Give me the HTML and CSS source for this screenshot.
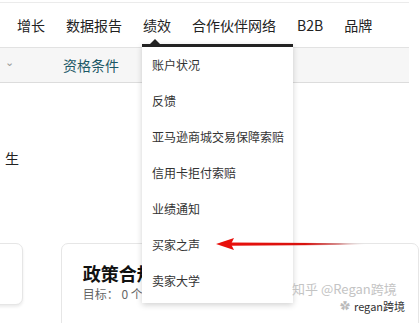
FILE: index.html
```html
<!DOCTYPE html>
<html lang="zh-CN">
<head>
    <meta charset="UTF-8">
    <title>绩效</title>
    <link rel="stylesheet" href="styles.css">
</head>
<body>
    <div class="page">
        <div class="topline"></div>

        <!-- Main nav -->
        <div class="nav">
            <span class="nav-item">增长</span>
            <span class="nav-item">数据报告</span>
            <span class="nav-item">绩效</span>
            <span class="nav-item">合作伙伴网络</span>
            <span class="nav-item">B2B</span>
            <span class="nav-item">品牌</span>
        </div>

        <div class="subnav">
            <span class="chevron">&#8964;</span>
            <span class="subnav-link">资格条件</span>
        </div>

        <div class="main">
            <div class="note">生</div>
            <div class="cards">
                <div class="card card-left"></div>
                <div class="card card-main">
                    <div class="card-title">政策合规</div>
                    <div class="card-sub">目标： 0 个</div>
                </div>
            </div>
        </div>

        <!-- Dropdown -->
        <div class="dropdown">
            <div class="caret"></div>
            <div class="menu-item">账户状况</div>
            <div class="menu-item">反馈</div>
            <div class="menu-item">亚马逊商城交易保障索赔</div>
            <div class="menu-item">信用卡拒付索赔</div>
            <div class="menu-item">业绩通知</div>
            <div class="menu-item">买家之声</div>
            <div class="menu-item">卖家大学</div>
        </div>

        <!-- Red arrow -->
        <svg class="arrow" width="170" height="14" viewBox="0 0 170 14">
            <defs>
                <linearGradient id="fade" x1="0" y1="0" x2="1" y2="0">
                    <stop offset="0" stop-color="#e8100c"/>
                    <stop offset="0.55" stop-color="#d8120e"/>
                    <stop offset="0.8" stop-color="#b22" stop-opacity="0.5"/>
                    <stop offset="1" stop-color="#ddd" stop-opacity="0"/>
                </linearGradient>
            </defs>
            <path d="M14 5.5 L150 6.3 L150 7.7 L14 8.8 Z" fill="url(#fade)"/>
            <path d="M0 7 L18 1 L15 7 L18 13 Z" fill="#e8100c"/>
        </svg>

        <div class="watermark">
            <div class="wm-main">知乎 @Regan跨境</div>
            <div class="wm-sub"><span class="wm-logo">✿</span>regan跨境</div>
        </div>
    </div>
</body>
</html>
```

FILE: styles.css
```css
* {
    margin: 0;
    padding: 0;
    box-sizing: border-box;
}

body {
    font-family: "Noto Sans CJK SC", "Noto Sans", sans-serif;
    background: white;
    color: #222;
    overflow: hidden;
}

.page {
    position: relative;
    width: 419px;
    height: 323px;
    overflow: hidden;
}

.topline {
    width: 409px;
    height: 3px;
    border-bottom: 1px solid #ebebeb;
}

/* Main nav */
.nav {
    display: flex;
    align-items: center;
    height: 44px;
    padding-left: 17px;
    gap: 21px;
    font-size: 14px;
    color: #222;
}

.subnav {
    display: flex;
    align-items: center;
    width: 409px;
    height: 36px;
    background: #f6f6f6;
    border-top: 1px solid #e2e2e2;
    border-bottom: 1px solid #dcdcdc;
    font-size: 14px;
}

.chevron {
    width: 63px;
    padding-left: 5px;
    margin-top: -8px;
    color: #999;
    font-size: 11px;
}

.subnav-link {
    color: #1c5866;
}

.main {
    padding-top: 65px;
}

.note {
    padding-left: 5px;
    font-size: 14px;
    line-height: 20px;
}

.cards {
    display: flex;
    gap: 38px;
    margin-top: 75px;
    margin-left: -53px;
}

.card {
    border: 1px solid #e6e6e6;
    border-radius: 7px;
    background: white;
}

.card-left {
    width: 85px;
    height: 62px;
    box-shadow: 0 2px 3px rgba(0, 0, 0, 0.08);
}

.card-main {
    width: 400px;
    height: 90px;
    padding: 17px 0 0 21px;
}

.card-title {
    font-size: 18px;
    font-weight: bold;
    line-height: 24px;
    color: #111;
}

.card-sub {
    font-size: 12px;
    line-height: 18px;
    color: #666;
}

/* Dropdown */
.dropdown {
    position: absolute;
    left: 142px;
    top: 44px;
    width: 151px;
    padding-bottom: 4px;
    background: white;
    border-top: 3px solid #222;
    box-shadow: 0 2px 6px rgba(0, 0, 0, 0.18);
}

.caret {
    position: absolute;
    left: 8px;
    top: -8px;
    width: 0;
    height: 0;
    border-left: 5px solid transparent;
    border-right: 5px solid transparent;
    border-bottom: 5px solid #222;
}

.menu-item {
    height: 36px;
    line-height: 36px;
    padding-left: 10px;
    font-size: 12px;
    color: #333;
    white-space: nowrap;
}

.arrow {
    position: absolute;
    left: 216px;
    top: 237px;
}

.watermark {
    position: absolute;
    left: 292px;
    top: 280px;
}

.wm-main {
    font-size: 13px;
    line-height: 18px;
    color: #c4c4c4;
}

.wm-sub {
    display: flex;
    align-items: center;
    margin-left: 48px;
    font-size: 11px;
    line-height: 16px;
    color: #333;
}

.wm-logo {
    width: 12px;
    margin-right: 2px;
    color: #bbb;
    font-size: 10px;
}
```
